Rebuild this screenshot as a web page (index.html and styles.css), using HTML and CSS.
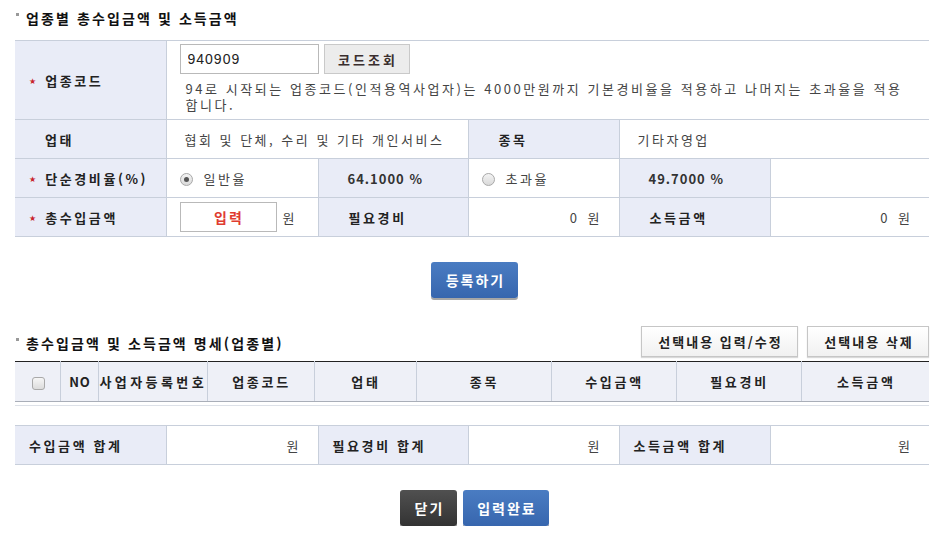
FILE: index.html
```html
<!DOCTYPE html>
<html lang="ko">
<head>
<meta charset="utf-8">
<link rel="stylesheet" href="styles.css">
</head>
<body>
<div class="page">
  <h2 class="sec-title"><span class="bullet"></span>업종별 총수입금액 및 소득금액</h2>
  <table class="form-table">
    <colgroup>
      <col style="width:151px"><col style="width:152px"><col style="width:150px"><col style="width:151px"><col style="width:151px"><col style="width:159px">
    </colgroup>
    <tr class="r1">
      <th class="lbl"><span class="star">★</span>업종코드</th>
      <td colspan="5" class="code-cell">
        <div class="code-line"><input class="code-input" type="text" value="940909"><button class="btn-grey">코드조회</button></div>
        <p class="note">94로 시작되는 업종코드(인적용역사업자)는 4000만원까지 기본경비율을 적용하고 나머지는 초과율을 적용합니다.</p>
      </td>
    </tr>
    <tr>
      <th class="lbl plain">업태</th>
      <td colspan="2" class="val">협회 및 단체, 수리 및 기타 개인서비스</td>
      <th class="lbl plain">종목</th>
      <td colspan="2" class="val">기타자영업</td>
    </tr>
    <tr>
      <th class="lbl"><span class="star">★</span>단순경비율(%)</th>
      <td class="val"><span class="radio on"></span>일반율</td>
      <td class="rate">64.1000 %</td>
      <td class="val"><span class="radio"></span>초과율</td>
      <td class="rate">49.7000 %</td>
      <td class="val"></td>
    </tr>
    <tr>
      <th class="lbl"><span class="star">★</span>총수입금액</th>
      <td class="val"><span class="amt-input">입력</span><span class="won">원</span></td>
      <th class="lbl plain">필요경비</th>
      <td class="num">0 원</td>
      <th class="lbl plain">소득금액</th>
      <td class="num">0 원</td>
    </tr>
  </table>

  <div class="btn-row first"><button class="btn-blue">등록하기</button></div>

  <div class="sec-head">
    <h2 class="sec-title"><span class="bullet"></span>총수입금액 및 소득금액 명세(업종별)</h2>
    <div class="sec-btns">
      <button class="btn-white wide">선택내용 입력/수정</button>
      <button class="btn-white">선택내용 삭제</button>
    </div>
  </div>
  <table class="list-table">
    <colgroup>
      <col style="width:45px"><col style="width:38px"><col style="width:109px"><col style="width:107px"><col style="width:102px"><col style="width:135px"><col style="width:125px"><col style="width:125px"><col style="width:128px">
    </colgroup>
    <tr>
      <th><span class="chk"></span></th>
      <th class="no">NO</th>
      <th class="tight">사업자등록번호</th>
      <th>업종코드</th>
      <th>업태</th>
      <th>종목</th>
      <th>수입금액</th>
      <th>필요경비</th>
      <th>소득금액</th>
    </tr>
    <tr class="empty"><td colspan="9"></td></tr>
  </table>

  <table class="form-table sum">
    <colgroup>
      <col style="width:151px"><col style="width:152px"><col style="width:150px"><col style="width:151px"><col style="width:151px"><col style="width:159px">
    </colgroup>
    <tr>
      <th class="lbl sumlbl">수입금액 합계</th>
      <td class="num">원</td>
      <th class="lbl sumlbl">필요경비 합계</th>
      <td class="num">원</td>
      <th class="lbl sumlbl">소득금액 합계</th>
      <td class="num">원</td>
    </tr>
  </table>

  <div class="btn-row last"><button class="btn-dark">닫기</button><button class="btn-blue">입력완료</button></div>
</div>
</body>
</html>
```
FILE: styles.css
```css
* { box-sizing: border-box; }
html, body { margin: 0; padding: 0; background: #fff; }
body {
  font-family: "Noto Sans CJK KR", "Noto Sans", "Liberation Sans", sans-serif;
  font-size: 13px;
  color: #333;
}
.page { padding: 6px 11px 0 15px; width: 940px; }
.sec-title {
  margin: 0;
  font-size: 14px;
  font-weight: bold;
  color: #111;
  height: 24px;
  line-height: 20px;
  display: flex;
  align-items: center;
  letter-spacing: 2.1px;
}
.bullet {
  display: inline-block;
  width: 3px; height: 3px;
  background: #999;
  margin: 0 7px 0 1px;
  position: relative; top: -4px;
}
.form-table {
  width: 914px;
  border-collapse: collapse;
  table-layout: fixed;
  margin-top: 10px;
  border-top: 1px solid #c8cfdb;
}
.form-table th, .form-table td {
  border: 1px solid #c8cfdb;
  border-left: none;
  border-right: 1px solid #c8cfdb;
  height: 39px;
  padding: 0;
  vertical-align: middle;
}
.form-table tr > *:last-child { border-right: none; }
.form-table .r1 > * { height: 79px; }
.lbl {
  background: #e9ecf7;
  text-align: left;
  font-weight: bold;
  color: #222;
  padding-left: 14px !important;
  white-space: nowrap;
  letter-spacing: 2.6px;
}
.lbl.plain { padding-left: 30px !important; }
.star {
  color: #c8242b;
  font-size: 8px;
  margin-right: 9px;
  position: relative;
  top: -2px;
  letter-spacing: 0;
  font-family: "DejaVu Sans", sans-serif;
}
.code-cell { padding: 3px 14px 6px 13px !important; vertical-align: top !important; }
.code-line { display: flex; align-items: center; gap: 5px; }
.code-input {
  width: 139px; height: 30px;
  border: 1px solid #b9b9b9;
  font-family: "Liberation Sans", sans-serif;
  font-size: 14px;
  letter-spacing: 1px;
  padding: 0 7px;
  color: #222;
}
.btn-grey {
  width: 86px; height: 30px;
  background: #ececec;
  border: 1px solid #c9c9c9;
  font-family: inherit;
  font-weight: bold;
  font-size: 13px;
  color: #3a2e2e;
  letter-spacing: 3px;
  padding: 0 0 0 3px;
}
.note { margin: 7px 0 0 6px; line-height: 16px; font-size: 13px; color: #444; letter-spacing: 2.55px; }
.val { padding-left: 18px !important; color: #444; white-space: nowrap; letter-spacing: 2.5px; }
.rate { background: #e9ecf7; font-weight: bold; padding-left: 29px !important; color: #333; letter-spacing: 1px; }
.num { text-align: right; padding-right: 19px !important; color: #444; word-spacing: 7px; }
.radio {
  display: inline-block;
  width: 13px; height: 13px;
  border-radius: 50%;
  border: 1px solid #a9a9a9;
  background: linear-gradient(#f4f4f4, #d9d9d9);
  vertical-align: -2px;
  margin: 0 11px 0 -5px;
  position: relative;
}
.radio.on::after {
  content: "";
  position: absolute;
  left: 3px; top: 3px;
  width: 5px; height: 5px;
  border-radius: 50%;
  background: #555;
}
.amt-input {
  display: inline-block;
  width: 97px; height: 30px;
  border: 1px solid #b9b9b9;
  text-align: center;
  line-height: 28px;
  color: #e03c31;
  font-weight: bold;
  font-size: 14px;
  letter-spacing: 2px;
  padding-left: 2px;
  margin-left: -5px;
  vertical-align: middle;
}
.won { margin-left: 6px; vertical-align: middle; }
.btn-row { display: flex; justify-content: center; gap: 6px; }
.btn-row.first { margin-top: 25px; padding-left: 5px; }
.btn-row.last { margin-top: 25px; padding-left: 5px; }
.btn-blue, .btn-dark {
  height: 36px;
  border: none;
  border-radius: 3px;
  color: #fff;
  font-family: inherit;
  font-weight: bold;
  font-size: 14px;
  padding: 0 0 0 2px;
  letter-spacing: 2px;
  box-shadow: 0 2px 0 rgba(0,0,0,0.35);
}
.btn-blue { background: linear-gradient(#4a7cc2, #3766ae); }
.btn-dark { background: linear-gradient(#505050, #333); width: 57px; }
.btn-row.first .btn-blue { width: 87px; }
.btn-row.last .btn-blue { width: 86px; }
.sec-head { display: flex; justify-content: space-between; align-items: flex-end; margin-top: 28px; }
.sec-head .sec-title { margin-bottom: 2px; }
.sec-btns { display: flex; gap: 9px; }
.btn-white {
  height: 31px;
  width: 122px;
  padding: 0 0 0 2px;
  background: linear-gradient(#fff, #f1f1f1);
  border: 1px solid #c6c6c6;
  box-shadow: 0 1px 1px rgba(0,0,0,0.15);
  font-family: inherit;
  font-weight: bold;
  font-size: 13px;
  color: #222;
  letter-spacing: 2px;
}
.btn-white.wide { width: 157px; }
.list-table {
  width: 914px;
  border-collapse: collapse;
  table-layout: fixed;
  margin-top: 4px;
  border-top: 1px solid #222;
}
.list-table th {
  background: #eef0f7;
  height: 40px;
  font-weight: bold;
  color: #222;
  border-right: 1px solid #c8cfdb;
  border-bottom: 1px solid #a9aeb8;
  padding: 0 0 0 2px;
  white-space: nowrap;
  letter-spacing: 2.7px;
}
.list-table th:last-child { border-right: none; }
.list-table th.no { letter-spacing: 1px; }
.list-table th.tight { letter-spacing: 3.4px; text-align: left; padding-left: 1px; }
.list-table .empty td { height: 4px; padding: 0; border-bottom: 1px solid #dde1e8; }
.chk {
  display: inline-block;
  width: 13px; height: 13px;
  border: 1px solid #a9a9a9;
  border-radius: 3px;
  background: linear-gradient(#f6f6f6, #dcdcdc);
  vertical-align: middle;
}
.form-table.sum { margin-top: 19px; }
.sumlbl { padding-left: 14px !important; }
```
